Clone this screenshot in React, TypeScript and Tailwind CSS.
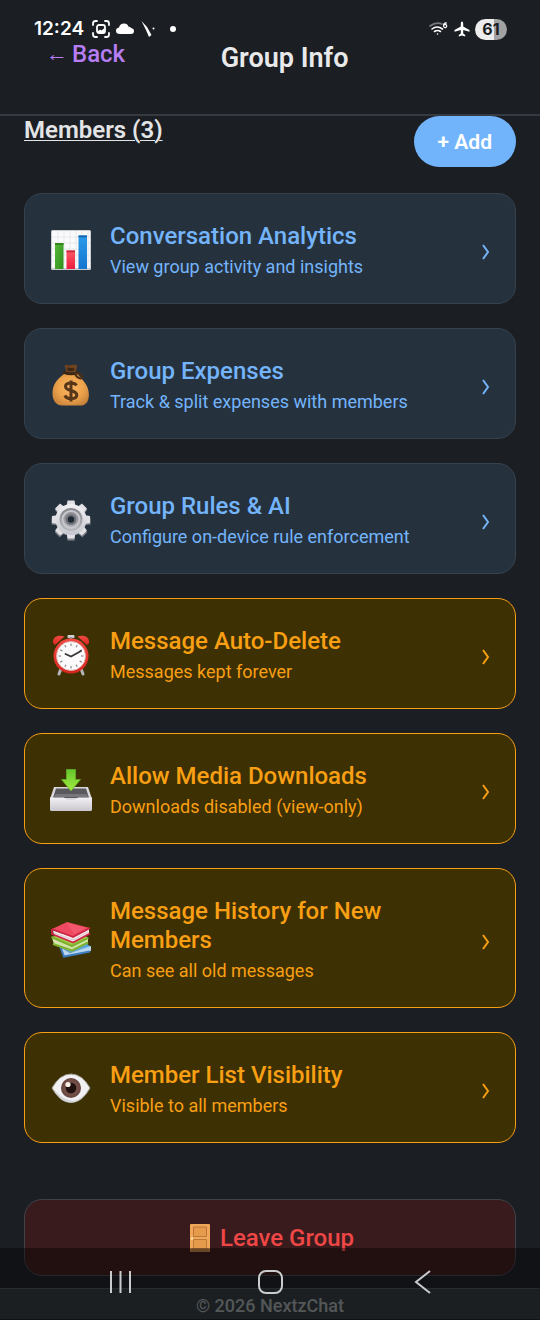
import type { ReactNode } from "react";

function ChartIcon() {
  return (
    <svg viewBox="0 0 42 42" className="size-[42px]" aria-hidden="true">
      <defs>
        <linearGradient id="chGreen" x1="0" x2="1" y1="0" y2="1"><stop stopColor="#56b83a" /><stop offset="1" stopColor="#2f8f1c" /></linearGradient>
        <linearGradient id="chRed" x2="0" y2="1"><stop stopColor="#ff5a66" /><stop offset="1" stopColor="#ea1d40" /></linearGradient>
        <linearGradient id="chBlue" x2="0" y2="1"><stop stopColor="#2b9bea" /><stop offset="1" stopColor="#1575cf" /></linearGradient>
      </defs>
      <rect x="1" y="1" width="40" height="40" rx="1.5" fill="#c9ccd1" />
      <rect x="2" y="2" width="38" height="37" rx="1" fill="#fafafa" />
      <path d="M2 8H40M2 14H40M2 20H40M2 26H40M2 32H40M8 2V39M14 2V39M20 2V39M26 2V39M32 2V39M38 2V39" stroke="#e3e5e8" strokeWidth="0.8" />
      <path d="M5 14h8.500v26H5z" fill="url(#chGreen)" />
      <path d="M5 14h8.500v2H5z" fill="#35851f" />
      <path d="M16.500 21.500h8.500V40h-8.500z" fill="url(#chRed)" />
      <path d="M16.500 21.500h8.500v1.800h-8.500z" fill="#c92a3f" />
      <path d="M28.500 6.500h8.500V40h-8.500z" fill="url(#chBlue)" />
      <path d="M28.500 6.500h8.500v1.800h-8.500z" fill="#1562a8" />
    </svg>
  );
}

function MoneyBagIcon() {
  return (
    <svg viewBox="0 0 42 42" className="size-[42px]" aria-hidden="true">
      <defs>
        <radialGradient id="bag" cx="0.5" cy="0.45" r="0.6"><stop stopColor="#fbb866" /><stop offset="0.6" stopColor="#eda24a" /><stop offset="1" stopColor="#c8843c" /></radialGradient>
      </defs>
      <path d="M15 9C12 12 3 17 2.500 28C2 36 6 41.500 12 41.500H31C37 41.500 40 35 38.500 27C37 18 29 13 27 9Z" fill="url(#bag)" />
      <path d="M14.500 1.500C17 0 20 2 22 .8C24 .2 26 .7 27.500 1.500L25.500 8.500H16.500Z" fill="#6d4321" />
      <path d="M17 3.500L24.500 4.500L23 7H18Z" fill="#3e2411" />
      <path d="M14 8.500Q21 11.500 28 8.500" fill="none" stroke="#3b2513" strokeWidth="2.600" strokeLinecap="round" />
      <path d="M26 9Q30 9 32.500 13M25 10Q27 14 31 14.500" fill="none" stroke="#4b2e17" strokeWidth="2" strokeLinecap="round" />
      <path d="M26.500 21.500C24.500 18 15.500 18 15.500 22.800C15.500 27.500 26.800 25.500 26.800 31C26.800 35.500 17 36 14.800 31.500M21 16.500V37.500" fill="none" stroke="#573619" strokeWidth="3" />
    </svg>
  );
}

const teeth = [0, 45, 90, 135, 180, 225, 270, 315];

function GearIcon() {
  return (
    <svg viewBox="0 0 42 42" className="size-[42px]" aria-hidden="true">
      <defs>
        <linearGradient id="gear" x2="0" y2="1"><stop stopColor="#f1f1f4" /><stop offset="1" stopColor="#c6c6ce" /></linearGradient>
        <linearGradient id="gearIn" x2="0" y2="1"><stop stopColor="#85858c" /><stop offset="1" stopColor="#b9b9c0" /></linearGradient>
      </defs>
      <g fill="#85858e">
        {teeth.map((a) => <path key={a} d="M17 9L17.500 2.500H24.500L25 9Z" transform={`rotate(${a} 21 22)`} />)}
        <circle cx="21" cy="22" r="15" />
      </g>
      <g fill="#e0e0e5">
        {teeth.map((a) => <path key={a} d="M16.500 8L17.500 1.500H24.500L25.500 8Z" transform={`rotate(${a} 21 20.500)`} />)}
      </g>
      <circle cx="21" cy="20.500" r="15.500" fill="url(#gear)" />
      <circle cx="21" cy="20.500" r="11.500" fill="url(#gearIn)" />
      <circle cx="21" cy="20.500" r="8.500" fill="none" stroke="#c9c9cf" strokeWidth="1.800" />
      <circle cx="21" cy="20.500" r="5.500" fill="#73737b" />
      <circle cx="21" cy="20.500" r="3.200" fill="#202a35" />
    </svg>
  );
}

function AlarmIcon() {
  return (
    <svg viewBox="0 0 42 42" className="size-[42px]" aria-hidden="true">
      <defs>
        <linearGradient id="alarm" x2="0" y2="1"><stop stopColor="#f34a43" /><stop offset="1" stopColor="#d8261f" /></linearGradient>
      </defs>
      <path d="M10.500 36L9 40M31.500 36L33 40" stroke="#b5b5ba" strokeWidth="3" strokeLinecap="round" />
      <path d="M3 9C2.500 3 8 .5 14.500 2.500L5 11Z" fill="url(#alarm)" />
      <path d="M39 9C39.500 3 34 .5 27.500 2.500L37 11Z" fill="url(#alarm)" />
      <rect x="17.500" y="1" width="7" height="3" rx="1" fill="#d2d2d5" />
      <rect x="19.500" y="3" width="3" height="4" fill="#9c9ca0" />
      <circle cx="21" cy="22" r="17.500" fill="url(#alarm)" />
      <circle cx="21" cy="22" r="14.500" fill="#fcfafa" stroke="#d7b4b2" strokeWidth="0.800" />
      {[0, 30, 60, 90, 120, 150, 180, 210, 240, 270, 300, 330].map((a) => (
        <path key={a} d="M21 9.500V12" stroke="#77757a" strokeWidth="1" transform={`rotate(${a} 21 22)`} />
      ))}
      <path d="M15.500 20L21 22.500L31 17" fill="none" stroke="#37363a" strokeWidth="1.800" strokeLinecap="round" />
    </svg>
  );
}

function InboxIcon() {
  return (
    <svg viewBox="0 0 42 42" className="size-[42px]" aria-hidden="true">
      <defs>
        <linearGradient id="tray" x2="0" y2="1"><stop stopColor="#f3f1f4" /><stop offset="1" stopColor="#c9c6ce" /></linearGradient>
        <linearGradient id="arrow" x2="0" y2="1"><stop stopColor="#63c42c" /><stop offset="1" stopColor="#a2ee43" /></linearGradient>
      </defs>
      <path d="M4 18H38L42 30V40Q42 42 40 42H2Q0 42 0 40V30Z" fill="#d9d7dc" />
      <path d="M6 19.500H36L39 29H3Z" fill="#59595d" />
      <path d="M3 28H39L36 25H6Z" fill="#77767b" />
      <path d="M0 28.500H14Q16 31 21 31T28 28.500H42V40Q42 42 40 42H2Q0 42 0 40Z" fill="url(#tray)" />
      <path d="M16.500 .5H25.500V10.500H30.500L21 22L11.500 10.500H16.500Z" fill="url(#arrow)" stroke="#63ae25" strokeWidth="0.800" />
    </svg>
  );
}

function BooksIcon() {
  return (
    <svg viewBox="0 0 42 42" className="size-[42px]" aria-hidden="true">
      <path d="M10 28L31 20L41 28L20 34Z" fill="#58a4df" />
      <path d="M10 28L20 34L41 27V32L14 38Z" fill="#b9d6f0" />
      <path d="M10 27L14 37.500L40 32.500" fill="none" stroke="#3d7dc2" strokeWidth="2" />
      <path d="M2 18L24 11L39 19L23 27Z" fill="#a1ce45" />
      <path d="M2 19L22 27.500L38 19V23L22 31.500L4 25Z" fill="#d3e5ab" />
      <path d="M1.500 18L22 27L38 19M3 25L22 31.500L38 23.500" fill="none" stroke="#7fb232" strokeWidth="2.200" />
      <path d="M2 10L17 3L40 9L23 18Z" fill="#ef4962" />
      <path d="M3 11.500L23 18.500L39 10V14.500L23 23L4 16Z" fill="#f5e8ec" />
      <path d="M4 14L23 21L38 13" fill="none" stroke="#d5bcc5" strokeWidth="0.800" />
      <path d="M2 10V15L23 23.500L40 14.500M2 10L23 18L40 9" fill="none" stroke="#cf2347" strokeWidth="1.800" strokeLinejoin="round" />
      <path d="M17 4L36 9L24 15Z" fill="#fa7183" opacity="0.400" />
    </svg>
  );
}

function EyeIcon() {
  return (
    <svg viewBox="0 0 42 42" className="size-[42px]" aria-hidden="true">
      <defs>
        <radialGradient id="iris"><stop stopColor="#472d2b" /><stop offset="0.700" stopColor="#765049" /><stop offset="1" stopColor="#63413c" /></radialGradient>
      </defs>
      <path d="M2 20Q10 6 21 6T40 20Q32 34.500 21 34.500T2 20Z" fill="#f1f1f3" stroke="#a5a19a" strokeWidth="1" />
      <path d="M3 20Q11 31 21 32.500T39 20Q32 34.500 21 34.500T3 20Z" fill="#d4d4d9" />
      <circle cx="21" cy="20" r="10" fill="url(#iris)" />
      <circle cx="21" cy="20" r="5.200" fill="#20100f" />
      <circle cx="18" cy="16.500" r="2.600" fill="#f8efe9" />
    </svg>
  );
}

type Tone = "blue" | "amber";

const tones: Record<Tone, string> = {
  blue: "border-[#36424e] bg-[#25323e] text-[#74b4fb]",
  amber: "border-[#f89f14] bg-[#3d3002] text-[#f89f14]",
};

const options: { title: string; note: string; tone: Tone; icon: ReactNode }[] = [
  { title: "Conversation Analytics", note: "View group activity and insights", tone: "blue", icon: <ChartIcon /> },
  { title: "Group Expenses", note: "Track & split expenses with members", tone: "blue", icon: <MoneyBagIcon /> },
  { title: "Group Rules & AI", note: "Configure on-device rule enforcement", tone: "blue", icon: <GearIcon /> },
  { title: "Message Auto-Delete", note: "Messages kept forever", tone: "amber", icon: <AlarmIcon /> },
  { title: "Allow Media Downloads", note: "Downloads disabled (view-only)", tone: "amber", icon: <InboxIcon /> },
  { title: "Message History for New Members", note: "Can see all old messages", tone: "amber", icon: <BooksIcon /> },
  { title: "Member List Visibility", note: "Visible to all members", tone: "amber", icon: <EyeIcon /> },
];

function OptionCard({ title, note, tone, icon }: (typeof options)[number]) {
  return (
    <button type="button" className={`flex w-full items-center rounded-[18px] border px-[25px] pt-7 pb-[25px] text-left ${tones[tone]}`}>
      <span className="shrink-0">{icon}</span>
      <span className="ml-[18px] flex flex-1 flex-col gap-[5px]">
        <span className="text-2xl leading-[29px] font-medium">{title}</span>
        <span className="text-lg leading-[22px]">{note}</span>
      </span>
      <svg viewBox="0 0 8 16" className="mt-1 ml-12 h-4 w-2 shrink-0" fill="none" stroke="currentColor" strokeWidth="2" aria-hidden="true">
        <path d="M1 1L6 8L1 15" />
      </svg>
    </button>
  );
}

function StatusBar() {
  return (
    <div className="flex h-10 items-center pt-[18px] pr-[33px] pl-[34px] text-white">
      <span className="font-['Inter'] text-[19px] leading-[22px] font-semibold">12:24</span>
      <svg viewBox="0 0 18 18" className="ml-2 size-[18px]" fill="none" stroke="currentColor" strokeWidth="1.800" strokeLinecap="round" aria-hidden="true">
        <path d="M1 5V3.500Q1 1 3.500 1H5M13 1h1.500Q17 1 17 3.500V5M17 13v1.500Q17 17 14.500 17H13M5 17H3.500Q1 17 1 14.500V13" />
        <rect x="5" y="5" width="8" height="8" rx="2" />
        <path d="M5.500 11.500L8 9.500L9.500 10.500L12.500 8V12.500H6Z" fill="currentColor" stroke="none" />
      </svg>
      <svg viewBox="0 0 18 12" className="ml-[6px] h-3 w-[18px]" fill="currentColor" aria-hidden="true">
        <path d="M4 11Q0 11 0 7.800Q0 5 3 4.500Q4 .5 8 .5Q11.500 .5 12.500 3.800Q14 3.300 15 5Q18 5.500 18 8Q18 11 15 11Z" />
      </svg>
      <svg viewBox="0 0 16 18" className="ml-[6px] h-[18px] w-4" fill="currentColor" aria-hidden="true">
        <path d="M1.500 1L7 7L11.500 15L9 17L6 10L1.500 1Z" /><circle cx="13.500" cy="8.500" r="1" />
      </svg>
      <span className="ml-[14px] size-[6px] rounded-full bg-white" />
      <svg viewBox="0 0 19 16" className="ml-auto h-4 w-[19px]" fill="none" stroke="currentColor" strokeWidth="1.600" strokeLinecap="round" aria-hidden="true">
        <path d="M1 5Q7 .5 13 3" stroke="#777b80" />
        <path d="M3 8Q8 4 13.500 8M5.500 10.500Q8.500 8.500 11.500 10.500" />
        <circle cx="8.500" cy="13" r="0.800" fill="currentColor" stroke="none" />
        <path d="M17.500 2Q14.500 1.500 14.500 4.800A1.600 1.600 0 1 0 16.200 3.400Q15 3.500 14.500 4.800" strokeWidth="1.200" />
      </svg>
      <svg viewBox="0 0 16 16" className="ml-[6px] size-4" fill="currentColor" aria-hidden="true">
        <path d="M8 .5Q9.200 .5 9.200 2.500V5.500L15.500 9V10.800L9.200 9V12.500L11.200 14V15.500L8 14.500L4.800 15.500V14L6.800 12.500V9L.5 10.800V9L6.800 5.500V2.500Q6.800 .5 8 .5Z" />
      </svg>
      <span className="ml-[5px] flex h-[21px] w-8 items-center justify-center rounded-full bg-linear-to-r from-[#ededed] from-60% to-[#a2a2a2] to-60% font-['Inter'] text-base leading-5 font-bold text-[#1b1e23]">61</span>
    </div>
  );
}

export default function App() {
  return (
    <div className="relative flex min-h-screen flex-col bg-[#1b1e23] font-['Roboto',sans-serif]">
      <StatusBar />
      <header className="flex items-start justify-between border-b-2 border-[#353941] px-[46px] pb-[42px]">
        <a href="#back" className="flex items-center gap-1 text-2xl leading-7 font-medium text-[#b67df5]">
          <span className="font-['Liberation_Sans',sans-serif] text-[22px] leading-7 font-bold">←</span>
          <span>Back</span>
        </a>
        <h1 className="mt-1 text-[27px] leading-7 font-semibold text-[#e8e9eb]">Group Info</h1>
        <span className="w-[50px]" />
      </header>
      <main className="flex flex-col px-6">
        <div className="flex items-start justify-between">
          <h2 className="text-2xl leading-7 font-semibold text-[#e3e4e6] underline decoration-1 underline-offset-2">Members (3)</h2>
          <button type="button" className="h-[51px] rounded-full bg-[#72b4fb] px-6 text-[21px] leading-6 font-semibold text-white">+ Add</button>
        </div>
        <div className="mt-[26px] flex flex-col gap-6">
          {options.map((o) => <OptionCard key={o.title} {...o} />)}
        </div>
        <button type="button" className="mt-14 flex h-[77px] items-center justify-center gap-2.5 rounded-[18px] border border-[#3f4149] bg-[#3a1b1d] pl-1 text-2xl leading-7 font-medium text-[#ee4746]">
          <svg viewBox="0 0 20 28" className="h-7 w-5" aria-hidden="true">
            <rect width="20" height="28" rx="1" fill="#efa759" />
            <rect x="0.500" y="25" width="19" height="3" fill="#ad7444" />
            <path d="M3.500 3H16.500V12.500H3.500ZM3.500 15.500H16.500V25H3.500Z" fill="#e69a4b" stroke="#b87436" strokeWidth="0.900" />
            <circle cx="2" cy="14.500" r="1.200" fill="#ffe0a0" />
          </svg>
          <span>Leave Group</span>
        </button>
      </main>
      <footer className="mt-3 border-t border-[#41474d] bg-[#2d3539] pt-1.5 pb-0.5 text-center text-lg leading-[22px] font-medium text-[#8b9193]">© 2026 NextzChat</footer>
      <nav aria-label="System" className="fixed inset-x-0 bottom-0 flex h-[72px] items-center justify-between bg-black/40 px-[108px] pb-1 text-[#c9cbcc]">
        <button type="button" aria-label="Recent apps">
          <svg viewBox="0 0 24 24" className="size-6" stroke="currentColor" strokeWidth="2"><path d="M3 1V23M12.500 1V23M22 1V23" /></svg>
        </button>
        <button type="button" aria-label="Home">
          <svg viewBox="0 0 26 24" className="h-6 w-[26px]" fill="none" stroke="currentColor" strokeWidth="2"><rect x="2" y="1" width="23" height="22" rx="7" /></svg>
        </button>
        <button type="button" aria-label="Back">
          <svg viewBox="0 0 24 24" className="size-6" fill="none" stroke="currentColor" strokeWidth="2"><path d="M22 1L8 12L22 23" /></svg>
        </button>
      </nav>
    </div>
  );
}
